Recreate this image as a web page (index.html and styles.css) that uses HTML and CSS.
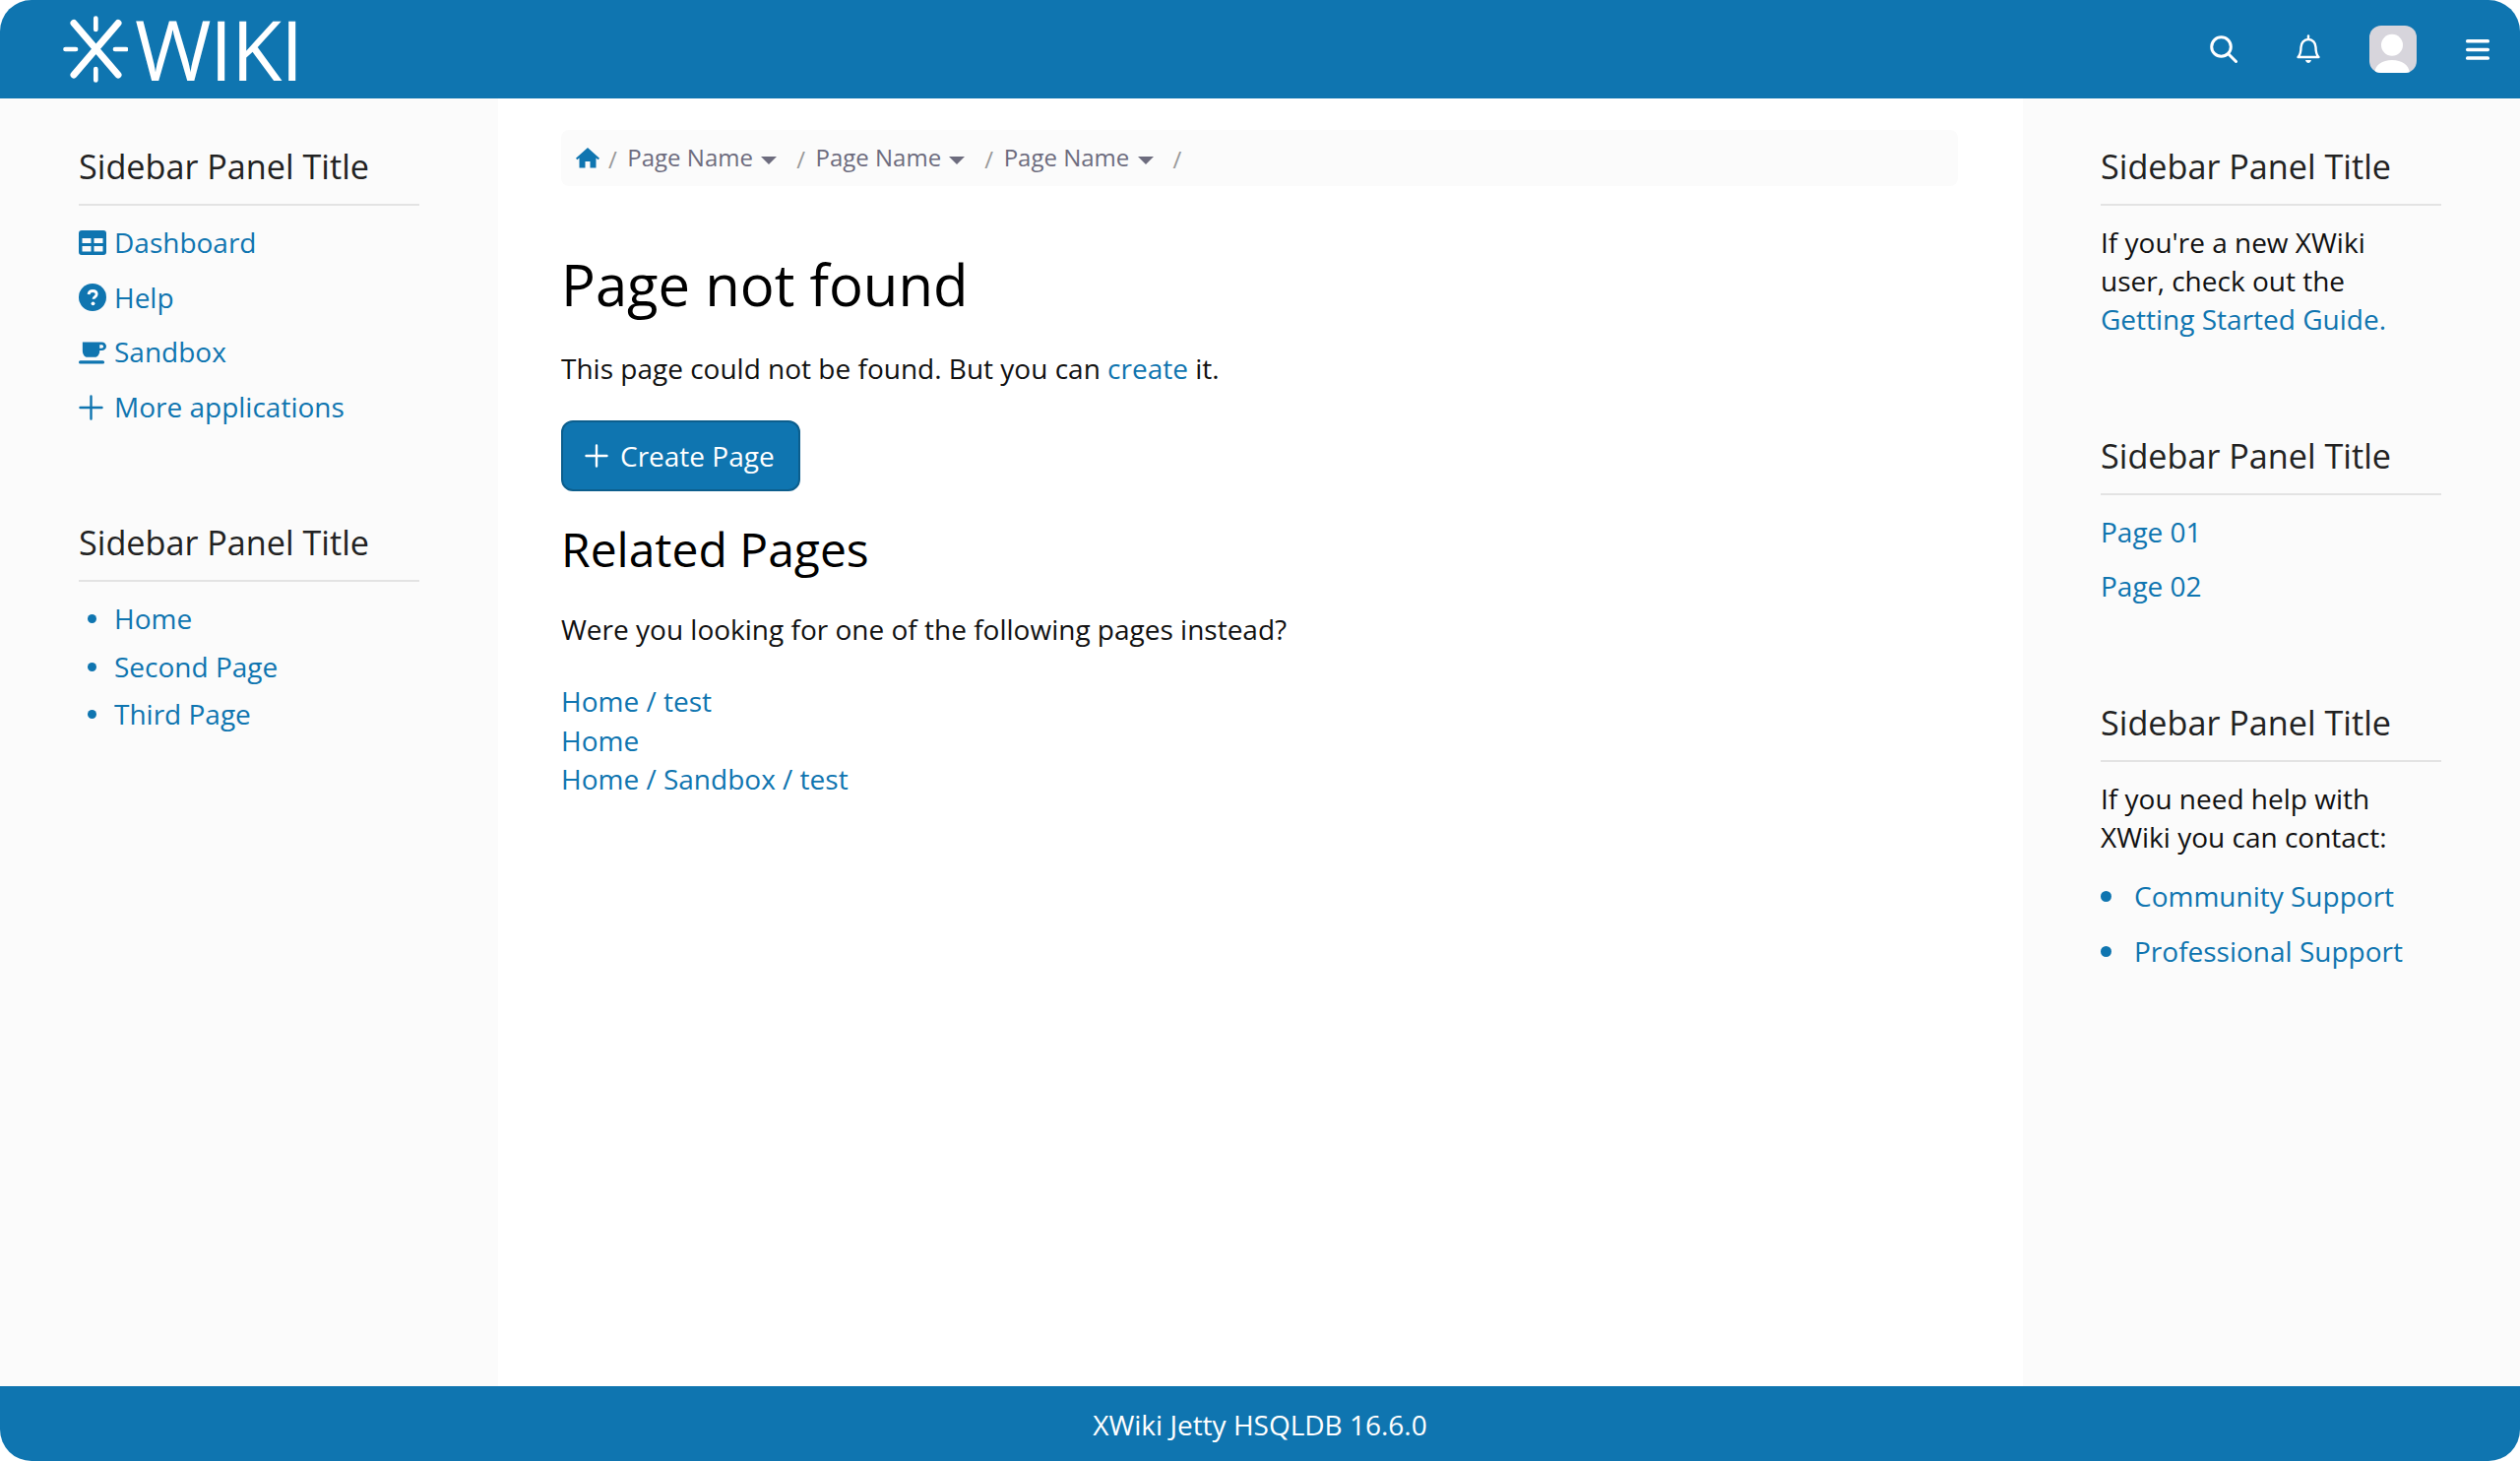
FILE: index.html
```html
<!DOCTYPE html>
<html lang="en">
<head>
<meta charset="utf-8">
<title>Page not found - XWiki</title>
<link rel="stylesheet" href="styles.css">
</head>
<body>
<div class="app">
  <header class="topbar">
    <a class="logo" href="#" aria-label="XWiki">
      <svg class="logo-mark" viewBox="0 0 66 68" width="66" height="68" fill="none" stroke="#fff" stroke-linecap="round">
        <path d="M11 7.500L56 60M56 7.500L11 60" stroke-width="7"/>
        <path d="M33.300 2.500V14M33.300 54V65.500M2.500 34H13M53 34H64" stroke-width="4.700"/>
      </svg>
      <span class="logo-text">WIKI</span>
    </a>
    <nav class="top-icons">
      <svg class="ti search" viewBox="0 0 28 28" width="28" height="28" fill="none" stroke="#fff" stroke-width="3" stroke-linecap="round"><circle cx="11.500" cy="11.500" r="9.800"/><path d="M19 19L26.500 26.500"/></svg>
      <svg class="ti" viewBox="0 0 24 30" width="24" height="30" fill="none" stroke="#fff" stroke-width="2.400" stroke-linecap="round" stroke-linejoin="round"><path d="M1.500 23c2-2 3-4 3-10 0-4.500 3.200-8 7.500-8s7.500 3.500 7.500 8c0 6 1 8 3 10z"/><path d="M12 1.500v3"/><path d="M9 26h6c-.5 2-1.800 3-3 3s-2.500-1-3-3z" fill="#fff" stroke="none"/></svg>
      <span class="avatar"><svg viewBox="0 0 48 48" width="48" height="48"><circle cx="23" cy="19.700" r="11" fill="#fff"/><path d="M5 48c1-8 8-13 18-13s17 5 18 13z" fill="#fff"/></svg></span>
      <svg class="ti" viewBox="0 0 24 21" width="24" height="21" fill="#fff"><rect x="0" y="0" width="24" height="3.500" rx="1.600"/><rect x="0" y="8.700" width="24" height="3.500" rx="1.600"/><rect x="0" y="17.300" width="24" height="3.500" rx="1.600"/></svg>
    </nav>
  </header>

  <div class="body-row">
    <aside class="sidebar left">
      <section class="panel">
        <h2 class="panel-title">Sidebar Panel Title</h2>
        <ul class="links">
          <li><a href="#"><svg class="ic" viewBox="0 0 28 25" width="28" height="25"><path fill="#0f75b0" fill-rule="evenodd" d="M3 0h22a3 3 0 0 1 3 3v19a3 3 0 0 1-3 3H3a3 3 0 0 1-3-3V3a3 3 0 0 1 3-3zM3.500 8v5h9v-5zm12 0v5h9v-5zm-12 8v5.500h9V16zm12 0v5.500h9V16z"/></svg>Dashboard</a></li>
          <li><a href="#"><svg class="ic" viewBox="0 0 28 28" width="28" height="28"><circle cx="14" cy="14" r="14" fill="#0f75b0"/><path d="M10 11c.3-2.300 2-3.500 4.200-3.500 2.400 0 4 1.400 4 3.300 0 2.800-3.200 2.800-3.200 5" fill="none" stroke="#fff" stroke-width="2.800"/><circle cx="14.500" cy="20.300" r="1.900" fill="#fff"/></svg>Help</a></li>
          <li><a href="#"><svg class="ic" viewBox="0 0 29 23" width="28" height="23"><path fill="#0f75b0" fill-rule="evenodd" d="M4 0h20c3 0 5 2 5 4.500S27 9 24 9h-2c0 4-2 7-5 7H9c-3 0-5-3-5-7zM22 3v3.500h2c1 0 2-.8 2-1.800S25 3 24 3z"/><rect x="0" y="19.500" width="27" height="3.500" rx="1.700" fill="#0f75b0"/></svg>Sandbox</a></li>
          <li><a href="#"><svg class="ic" viewBox="0 0 28 28" width="28" height="28" stroke="#0f75b0" stroke-width="2.400" stroke-linecap="round"><path d="M12.500 2.500v23M1.500 14h22"/></svg>More applications</a></li>
        </ul>
      </section>
      <section class="panel">
        <h2 class="panel-title">Sidebar Panel Title</h2>
        <ul class="bullets">
          <li><a href="#">Home</a></li>
          <li><a href="#">Second Page</a></li>
          <li><a href="#">Third Page</a></li>
        </ul>
      </section>
    </aside>

    <main class="content">
      <nav class="crumbs">
        <a class="home" href="#" aria-label="Home"><svg viewBox="0 0 24 22" width="24" height="22"><path fill="#0f75b0" d="M12 1 0 11.800l1.300 1.500L3.500 11.500V21.500h6v-6.500h5v6.500h6V11.500l2.200 1.800 1.300-1.500z"/></svg></a>
        <span class="sep">/</span>
        <a class="crumb" href="#">Page Name <i class="caret"></i></a>
        <span class="sep">/</span>
        <a class="crumb" href="#">Page Name <i class="caret"></i></a>
        <span class="sep">/</span>
        <a class="crumb" href="#">Page Name <i class="caret"></i></a>
        <span class="sep">/</span>
      </nav>
      <h1>Page not found</h1>
      <p class="lead">This page could not be found. But you can <a href="#">create</a> it.</p>
      <a class="btn" href="#"><svg viewBox="0 0 24 24" width="24" height="24" stroke="#fff" stroke-width="2.400" stroke-linecap="round"><path d="M12 1.500v21M1.500 12h21"/></svg>Create Page</a>
      <h2 class="related">Related Pages</h2>
      <p class="ask">Were you looking for one of the following pages instead?</p>
      <div class="results">
        <a href="#">Home / test</a>
        <a href="#">Home</a>
        <a href="#">Home / Sandbox / test</a>
      </div>
    </main>

    <aside class="sidebar right">
      <section class="panel">
        <h2 class="panel-title">Sidebar Panel Title</h2>
        <p class="panel-text">If you're a new XWiki user, check out the <a href="#">Getting Started Guide.</a></p>
      </section>
      <section class="panel">
        <h2 class="panel-title">Sidebar Panel Title</h2>
        <ul class="links">
          <li><a href="#">Page 01</a></li>
          <li><a href="#">Page 02</a></li>
        </ul>
      </section>
      <section class="panel">
        <h2 class="panel-title">Sidebar Panel Title</h2>
        <p class="panel-text short">If you need help with XWiki you can contact:</p>
        <ul class="bullets wide">
          <li><a href="#">Community Support</a></li>
          <li><a href="#">Professional Support</a></li>
        </ul>
      </section>
    </aside>
  </div>

  <footer class="footer">XWiki Jetty HSQLDB 16.6.0</footer>
</div>
</body>
</html>
```
FILE: styles.css
```css
* { box-sizing: border-box; }
html, body { margin: 0; padding: 0; height: 100%; background: #fff; }
body { font-family: "Open Sans", "Noto Sans", sans-serif; font-size: 28px; line-height: 39.2px; color: #111; }
a { color: #0f75b0; text-decoration: none; }
.app { display: flex; flex-direction: column; height: 1484px; width: 2560px; }

.topbar { height: 100px; background: #0f75b0; border-radius: 32px 32px 0 0; display: flex; align-items: center; justify-content: space-between; flex: none; padding: 0 31px 0 64px; }
.logo { display: flex; align-items: center; color: #fff; gap: 7px; }
.logo-text { font-size: 84px; line-height: 100px; font-weight: 400; color: #fff; letter-spacing: -1.500px; }
.top-icons { display: flex; align-items: center; gap: 50px; }
.search { margin-right: 10px; }
.avatar { width: 48px; height: 48px; border-radius: 12px; background: #d7d5dc; overflow: hidden; display: block; }
.avatar svg { display: block; }
.ti { display: block; }

.body-row { flex: 1; display: flex; min-height: 0; }
.sidebar { background: #fbfbfb; flex: none; }
.sidebar.left { width: 506px; padding: 44px 80px 0; }
.sidebar.right { width: 505px; margin-left: auto; padding: 44px 80px 0 79px; }

.panel { margin-bottom: 93px; }
.panel-title { font-size: 34.200px; line-height: 49px; font-weight: 400; margin: 0 0 18px; padding-bottom: 14px; border-bottom: 2px solid #e3e3e3; color: #222; }
.links { list-style: none; margin: 0; padding: 0; }
.links li { margin-bottom: 16.500px; }
.links a { display: flex; align-items: center; }
.ic { width: 28px; margin-right: 8px; flex: none; }
.bullets { list-style: none; margin: 0; padding: 0; }
.bullets li { display: flex; align-items: center; margin-bottom: 9px; }
.bullets li::before { content: ""; flex: none; width: 9px; height: 9px; border-radius: 50%; background: #0f75b0; margin: 0 18px 0 9px; }
.bullets.wide li { margin-bottom: 16.500px; }
.bullets.wide li::before { margin: 0 23px 0 0; margin-left: 0; width: 11px; height: 11px; }
.panel-text { margin: 0 0 25px; max-width: 300px; }
.panel-text.short { margin-bottom: 21px; }

.content { flex: none; width: 1419px; margin-left: 64px; padding-top: 32px; }
.crumbs { height: 57px; background: #fbfbfb; border-radius: 8px; display: flex; align-items: center; padding: 0 15px 2px; font-size: 24px; color: #6d6c7e; }
.crumbs a { color: #6d6c7e; }
.home { display: flex; }
.sep { color: #999; margin: 0 10.500px 0 9px; padding-top: 4px; }
.crumb { margin-right: 11px; }
.caret { display: inline-block; border: 8px solid transparent; border-top-color: #6d6c7e; border-bottom: 0; vertical-align: 2px; margin-left: 2px; }

h1 { font-size: 58px; line-height: 62px; font-weight: 400; margin: 69px 0 0; color: #000; }
.lead { margin: 35px 0 0; }
.btn { display: inline-flex; align-items: center; gap: 12px; height: 72px; margin-top: 33px; padding: 0 24px 0 22px; background: #0f75b0; border: 2px solid #0c5e8d; border-radius: 12px; color: #fff; }
.related { font-size: 48px; line-height: 56px; font-weight: 400; margin: 31px 0 0; color: #000; }
.ask { margin: 34px 0 0; }
.results { margin-top: 34px; display: flex; flex-direction: column; align-items: flex-start; }

.footer { height: 76px; flex: none; background: #0f75b0; color: #fff; border-radius: 0 0 32px 32px; display: flex; align-items: center; justify-content: center; padding-top: 3px; }
```
